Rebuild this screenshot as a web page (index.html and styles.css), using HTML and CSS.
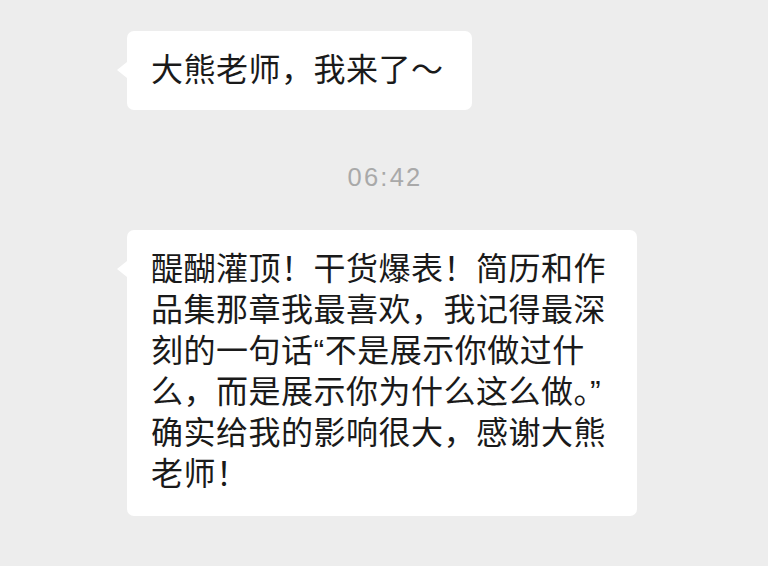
FILE: index.html
```html
<!DOCTYPE html>
<html lang="zh-CN">
<head>
  <meta charset="UTF-8" />
  <meta name="viewport" content="width=device-width, initial-scale=1.0"/>
  <title>聊天</title>
  <link rel="stylesheet" href="styles.css">
</head>
<body>

<div class="chat">
  <!-- first message -->
  <div class="msg">
    <div class="bubble">大熊老师，我来了～</div>
  </div>

  <div class="time">06:42</div>

  <!-- second message -->
  <div class="msg">
    <div class="bubble long">醍醐灌顶！干货爆表！简历和作<br>品集那章我最喜欢，我记得最深<br>刻的一句话“不是展示你做过什<br>么，而是展示你为什么这么做。”<br>确实给我的影响很大，感谢大熊<br>老师！</div>
  </div>
</div>

</body>
</html>
```

FILE: styles.css
```css
* {
  box-sizing: border-box;
}
body {
  margin: 0;
  background: #ededed;
  font-family: "Liberation Sans", "Noto Sans CJK SC", sans-serif;
  color: #1a1a1a;
}
.chat {
  padding: 31px 0 0 127px;
}
.msg {
  display: flex;
}
.bubble {
  position: relative;
  background: #fff;
  border-radius: 7px;
  padding: 19px 28px 19px 24px;
  font-size: 32px;
  line-height: 41px;
  letter-spacing: 0.5px;
  white-space: nowrap;
}
.bubble.long {
  padding: 19px 31px 21px 24px;
}
.bubble::before {
  content: "";
  position: absolute;
  left: -10px;
  top: 31px;
  border-top: 8px solid transparent;
  border-bottom: 8px solid transparent;
  border-right: 10px solid #fff;
}
.time {
  margin: 52px 0 38px -125px;
  text-align: center;
  font-size: 25.5px;
  line-height: 30px;
  letter-spacing: 2.2px;
  color: #a9a9a9;
}
```
